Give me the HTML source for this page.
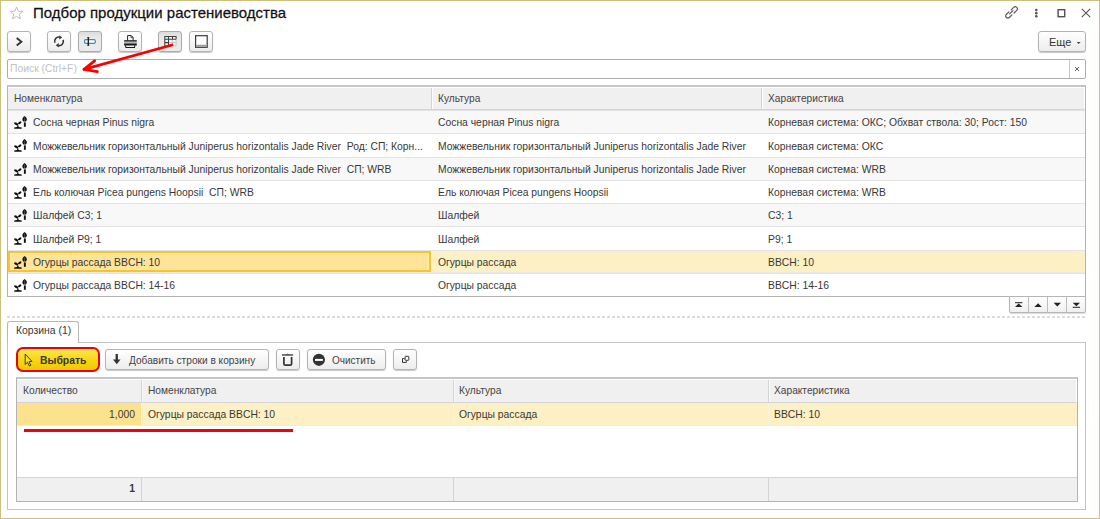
<!DOCTYPE html>
<html><head><meta charset="utf-8">
<style>
*{box-sizing:border-box;margin:0;padding:0}
html,body{width:1100px;height:519px;overflow:hidden;background:#fff}
body{position:relative;font-family:"Liberation Sans",sans-serif;font-size:10.35px;color:#383838}
.a{position:absolute}
.t{position:absolute;white-space:pre}
.frame{position:absolute;left:0;top:0;width:1100px;height:519px;border:1px solid #cdbf80}
.btn{position:absolute;height:21px;border:1px solid #b3b3b3;border-radius:3px;background:linear-gradient(#ffffff,#ededed);box-shadow:0 1px 1px rgba(0,0,0,.22)}
.btn.pr{background:linear-gradient(#dcdcdc,#e9e9e9 30%,#ebebeb);border-color:#ababab}
.btn svg{position:absolute;left:-1px;top:-1px}
.h{color:#454545;font-size:10.2px}
</style></head><body>
<div class="frame"></div>
<svg class="a" style="left:9px;top:6px" width="15" height="14" viewBox="0 0 15 14"><path d="M7.5 1 L9.2 5.2 L13.8 5.4 L10.2 8.3 L11.4 12.8 L7.5 10.3 L3.6 12.8 L4.8 8.3 L1.2 5.4 L5.8 5.2 Z" fill="none" stroke="#b9bfc7" stroke-width="1"/></svg>
<div class="t" style="left:33px;top:5px;font-size:15px;line-height:15px;color:#111;-webkit-text-stroke:0.25px #111;transform:scaleY(1.035);transform-origin:0 0">Подбор продукции растениеводства</div>
<svg class="a" style="left:1004px;top:5px" width="15" height="15" viewBox="0 0 15 15"><g fill="none" stroke="#5a5a5a" stroke-width="1.2" stroke-linecap="round"><path d="M5.6 8.9 L8.9 5.6"/><path d="M4.9 6.9 L2.3 9.5 a2.1 2.1 0 0 0 3 3 L7.9 9.9"/><path d="M10.1 8 L12.7 5.4 a2.1 2.1 0 0 0 -3 -3 L7.2 4.9"/></g></svg>
<svg class="a" style="left:1034px;top:8px" width="5" height="11" viewBox="0 0 5 11"><g fill="#555"><circle cx="2.3" cy="2" r="1.3"/><circle cx="2.3" cy="5.15" r="1.3"/><circle cx="2.3" cy="8.3" r="1.3"/></g></svg>
<svg class="a" style="left:1057px;top:9px" width="9" height="9" viewBox="0 0 9 9"><rect x="1.1" y="0.7" width="6.6" height="7" fill="none" stroke="#505050" stroke-width="1.4"/></svg>
<svg class="a" style="left:1081px;top:8px" width="10" height="10" viewBox="0 0 10 10"><path d="M0.8 0.8 L9.2 9.2 M9.2 0.8 L0.8 9.2" stroke="#555" stroke-width="1.1"/></svg>
<div class="btn" style="left:7px;top:31px;width:24px;height:21px"><svg width="24" height="21" viewBox="0 0 24 21"><path d="M9.7 6.9 L14.4 10.65 L9.7 14.4" fill="none" stroke="#333" stroke-width="1.9"/></svg></div>
<div class="btn" style="left:47px;top:31px;width:24px;height:21px"><svg width="24" height="21" viewBox="0 0 24 21"><g fill="none" stroke="#333" stroke-width="1.6"><path d="M7.9 11.8 A4.2 4.2 0 0 1 12.8 6.2"/><path d="M16.1 8.9 A4.2 4.2 0 0 1 11.2 14.5"/></g><path d="M12.3 4.2 L15.2 6.4 L12.3 8.6 Z" fill="#333"/><path d="M11.7 16.5 L8.8 14.3 L11.7 12.1 Z" fill="#333"/></svg></div>
<div class="btn pr" style="left:78px;top:31px;width:24px;height:21px"><svg width="24" height="21" viewBox="0 0 24 21"><rect x="6.5" y="8.6" width="10.8" height="3.8" rx="1.3" fill="#fff" stroke="#4682b8" stroke-width="1.2"/><path d="M10.3 6.4 V14.5" stroke="#1a1a1a" stroke-width="1.3"/><path d="M9.3 6.6 H11.3 M9.3 14.3 H11.3" stroke="#1a1a1a" stroke-width="0.9"/></svg></div>
<div class="btn" style="left:118px;top:31px;width:24px;height:21px"><svg width="24" height="21" viewBox="0 0 24 21"><path d="M9.6 9.6 V4.6 H13.3 L15.1 6.5 V9.6" fill="#fff" stroke="#222" stroke-width="1"/><path d="M13.1 4.6 V6.7 H15.1" fill="none" stroke="#222" stroke-width="0.8"/><rect x="6.1" y="9.2" width="12.7" height="1.4" fill="#1a1a1a"/><rect x="6.1" y="11.3" width="12.7" height="0.7" fill="#9a9a9a"/><rect x="6.1" y="12.4" width="12.7" height="2.1" fill="#1a1a1a"/><path d="M7.5 14.4 L7.9 16.4 H16.5 L16.9 14.4" fill="none" stroke="#1a1a1a" stroke-width="1.05"/></svg></div>
<div class="btn pr" style="left:158px;top:31px;width:24px;height:21px"><svg width="24" height="21" viewBox="0 0 24 21"><rect x="6.8" y="5.5" width="11.3" height="9.4" fill="#f4f4f4"/><g fill="none"><path d="M10.5 11.5 H18.1 V14.9 H10.5 M14.5 8.3 V14.9 M18.1 8.3 V11.5" stroke="#c4c4c4" stroke-width="0.9"/><path d="M6.8 15.2 V5.5 H18.1 V8.3 M6.8 8.3 H18.1 M6.8 11.6 H10.5 M6.8 14.9 H10.5 M10.5 5.5 V15.2 M14.5 5.5 V8.3" stroke="#404040" stroke-width="1.05"/></g></svg></div>
<div class="btn" style="left:189px;top:31px;width:24px;height:21px"><svg width="24" height="21" viewBox="0 0 24 21"><rect x="6.6" y="4.7" width="11.6" height="11.6" fill="#fff" stroke="#3a3a3a" stroke-width="1.2"/><rect x="7.2" y="14" width="10.4" height="1.7" fill="#9a9a9a"/><path d="M7.2 13.5 H17.6" stroke="#bbb" stroke-width="0.7" stroke-dasharray="1 0.8"/></svg></div>
<div class="btn" style="left:1038px;top:31px;width:48px;height:21px"><svg width="46" height="19" viewBox="0 0 46 19"><path d="M38.7 11 H42.7 L40.7 13.1 Z" fill="#444"/></svg><div class="t" style="left:10px;top:1px;line-height:19px;color:#333;font-size:11px">Еще</div></div>
<div class="a" style="left:7px;top:59px;width:1079px;height:20px;border:1px solid #adadad;border-radius:2px;background:#fff"></div>
<div class="t" style="left:10px;top:60px;line-height:18px;color:#c2c2c2;font-size:10.35px">Поиск (Ctrl+F)</div>
<div class="a" style="left:1069px;top:60px;width:1px;height:18px;background:#c8c8c8"></div>
<svg class="a" style="left:1073px;top:65px" width="8" height="8" viewBox="0 0 8 8"><path d="M2 2 L6 6 M6 2 L2 6" stroke="#555" stroke-width="0.95"/></svg>
<div class="a" style="left:7px;top:85px;width:1079px;height:212px;border:1px solid #b3b3b3;border-top:2px solid #c6c6c6;background:#fff"></div>
<div class="a" style="left:8px;top:87px;width:1077px;height:23px;background:#f0f0f0;border-top:1px solid #fff;border-right:1px solid #fff;border-bottom:1px solid #d4d4d4"></div>
<div class="a" style="left:431px;top:88px;width:1px;height:21px;background:#d4d4d4"></div>
<div class="a" style="left:432px;top:88px;width:1px;height:21px;background:#fff"></div>
<div class="a" style="left:761px;top:88px;width:1px;height:21px;background:#d4d4d4"></div>
<div class="a" style="left:762px;top:88px;width:1px;height:21px;background:#fff"></div>
<div class="t h" style="left:14px;top:88px;line-height:21px">Номенклатура</div>
<div class="t h" style="left:438px;top:88px;line-height:21px">Культура</div>
<div class="t h" style="left:768px;top:88px;line-height:21px">Характеристика</div>
<div class="a" style="left:8px;top:110px;width:1077px;height:23px;background:#f8f8f8;border-top:1px solid #e3e3e3"></div>
<div class="a" style="left:8px;top:110px;width:30px;height:23px"><svg class="a" style="left:6px;top:5px" width="15" height="15" viewBox="0 0 15 15"><g fill="#111"><path d="M10.6 0.9 C12.9 2.2 13.5 4.7 12 6.4 L9.2 6.4 C7.7 4.7 8.3 2.2 10.6 0.9 Z"/><rect x="9.9" y="7.4" width="1.9" height="4.4"/><ellipse cx="2.1" cy="8.8" rx="2.15" ry="1.2" transform="rotate(30 2.1 8.8)"/><ellipse cx="5.7" cy="7.8" rx="1.95" ry="1.05" transform="rotate(-35 5.7 7.8)"/><rect x="3.4" y="10" width="0.9" height="2"/><path d="M0.2 13.8 V12.5 Q1.6 12 2.9 12 Q3.2 11.2 3.85 11.2 Q4.5 11.2 4.8 12 Q6.3 12 7.7 12.5 V13.8 Z"/></g><path d="M10.6 2.4 V6.2" stroke="#777" stroke-width="0.6"/></svg></div>
<div class="t" style="left:33px;top:112px;line-height:22px">Сосна черная Pinus nigra</div>
<div class="t" style="left:438px;top:112px;line-height:22px">Сосна черная Pinus nigra</div>
<div class="t" style="left:768px;top:112px;line-height:22px">Корневая система: ОКС; Обхват ствола: 30; Рост: 150</div>
<div class="a" style="left:8px;top:133px;width:1077px;height:24px;background:#ffffff;border-top:1px solid #e3e3e3"></div>
<div class="a" style="left:8px;top:133px;width:30px;height:24px"><svg class="a" style="left:6px;top:5px" width="15" height="15" viewBox="0 0 15 15"><g fill="#111"><path d="M10.6 0.9 C12.9 2.2 13.5 4.7 12 6.4 L9.2 6.4 C7.7 4.7 8.3 2.2 10.6 0.9 Z"/><rect x="9.9" y="7.4" width="1.9" height="4.4"/><ellipse cx="2.1" cy="8.8" rx="2.15" ry="1.2" transform="rotate(30 2.1 8.8)"/><ellipse cx="5.7" cy="7.8" rx="1.95" ry="1.05" transform="rotate(-35 5.7 7.8)"/><rect x="3.4" y="10" width="0.9" height="2"/><path d="M0.2 13.8 V12.5 Q1.6 12 2.9 12 Q3.2 11.2 3.85 11.2 Q4.5 11.2 4.8 12 Q6.3 12 7.7 12.5 V13.8 Z"/></g><path d="M10.6 2.4 V6.2" stroke="#777" stroke-width="0.6"/></svg></div>
<div class="t" style="left:33px;top:135px;line-height:23px">Можжевельник горизонтальный Juniperus horizontalis Jade River  Род: СП; Корн...</div>
<div class="t" style="left:438px;top:135px;line-height:23px">Можжевельник горизонтальный Juniperus horizontalis Jade River</div>
<div class="t" style="left:768px;top:135px;line-height:23px">Корневая система: ОКС</div>
<div class="a" style="left:8px;top:157px;width:1077px;height:23px;background:#f8f8f8;border-top:1px solid #e3e3e3"></div>
<div class="a" style="left:8px;top:157px;width:30px;height:23px"><svg class="a" style="left:6px;top:5px" width="15" height="15" viewBox="0 0 15 15"><g fill="#111"><path d="M10.6 0.9 C12.9 2.2 13.5 4.7 12 6.4 L9.2 6.4 C7.7 4.7 8.3 2.2 10.6 0.9 Z"/><rect x="9.9" y="7.4" width="1.9" height="4.4"/><ellipse cx="2.1" cy="8.8" rx="2.15" ry="1.2" transform="rotate(30 2.1 8.8)"/><ellipse cx="5.7" cy="7.8" rx="1.95" ry="1.05" transform="rotate(-35 5.7 7.8)"/><rect x="3.4" y="10" width="0.9" height="2"/><path d="M0.2 13.8 V12.5 Q1.6 12 2.9 12 Q3.2 11.2 3.85 11.2 Q4.5 11.2 4.8 12 Q6.3 12 7.7 12.5 V13.8 Z"/></g><path d="M10.6 2.4 V6.2" stroke="#777" stroke-width="0.6"/></svg></div>
<div class="t" style="left:33px;top:159px;line-height:22px">Можжевельник горизонтальный Juniperus horizontalis Jade River  СП; WRB</div>
<div class="t" style="left:438px;top:159px;line-height:22px">Можжевельник горизонтальный Juniperus horizontalis Jade River</div>
<div class="t" style="left:768px;top:159px;line-height:22px">Корневая система: WRB</div>
<div class="a" style="left:8px;top:180px;width:1077px;height:23px;background:#ffffff;border-top:1px solid #e3e3e3"></div>
<div class="a" style="left:8px;top:180px;width:30px;height:23px"><svg class="a" style="left:6px;top:5px" width="15" height="15" viewBox="0 0 15 15"><g fill="#111"><path d="M10.6 0.9 C12.9 2.2 13.5 4.7 12 6.4 L9.2 6.4 C7.7 4.7 8.3 2.2 10.6 0.9 Z"/><rect x="9.9" y="7.4" width="1.9" height="4.4"/><ellipse cx="2.1" cy="8.8" rx="2.15" ry="1.2" transform="rotate(30 2.1 8.8)"/><ellipse cx="5.7" cy="7.8" rx="1.95" ry="1.05" transform="rotate(-35 5.7 7.8)"/><rect x="3.4" y="10" width="0.9" height="2"/><path d="M0.2 13.8 V12.5 Q1.6 12 2.9 12 Q3.2 11.2 3.85 11.2 Q4.5 11.2 4.8 12 Q6.3 12 7.7 12.5 V13.8 Z"/></g><path d="M10.6 2.4 V6.2" stroke="#777" stroke-width="0.6"/></svg></div>
<div class="t" style="left:33px;top:182px;line-height:22px">Ель колючая Picea pungens Hoopsii  СП; WRB</div>
<div class="t" style="left:438px;top:182px;line-height:22px">Ель колючая Picea pungens Hoopsii</div>
<div class="t" style="left:768px;top:182px;line-height:22px">Корневая система: WRB</div>
<div class="a" style="left:8px;top:203px;width:1077px;height:23px;background:#f8f8f8;border-top:1px solid #e3e3e3"></div>
<div class="a" style="left:8px;top:203px;width:30px;height:23px"><svg class="a" style="left:6px;top:5px" width="15" height="15" viewBox="0 0 15 15"><g fill="#111"><path d="M10.6 0.9 C12.9 2.2 13.5 4.7 12 6.4 L9.2 6.4 C7.7 4.7 8.3 2.2 10.6 0.9 Z"/><rect x="9.9" y="7.4" width="1.9" height="4.4"/><ellipse cx="2.1" cy="8.8" rx="2.15" ry="1.2" transform="rotate(30 2.1 8.8)"/><ellipse cx="5.7" cy="7.8" rx="1.95" ry="1.05" transform="rotate(-35 5.7 7.8)"/><rect x="3.4" y="10" width="0.9" height="2"/><path d="M0.2 13.8 V12.5 Q1.6 12 2.9 12 Q3.2 11.2 3.85 11.2 Q4.5 11.2 4.8 12 Q6.3 12 7.7 12.5 V13.8 Z"/></g><path d="M10.6 2.4 V6.2" stroke="#777" stroke-width="0.6"/></svg></div>
<div class="t" style="left:33px;top:205px;line-height:22px">Шалфей С3; 1</div>
<div class="t" style="left:438px;top:205px;line-height:22px">Шалфей</div>
<div class="t" style="left:768px;top:205px;line-height:22px">С3; 1</div>
<div class="a" style="left:8px;top:226px;width:1077px;height:24px;background:#ffffff;border-top:1px solid #e3e3e3"></div>
<div class="a" style="left:8px;top:226px;width:30px;height:24px"><svg class="a" style="left:6px;top:5px" width="15" height="15" viewBox="0 0 15 15"><g fill="#111"><path d="M10.6 0.9 C12.9 2.2 13.5 4.7 12 6.4 L9.2 6.4 C7.7 4.7 8.3 2.2 10.6 0.9 Z"/><rect x="9.9" y="7.4" width="1.9" height="4.4"/><ellipse cx="2.1" cy="8.8" rx="2.15" ry="1.2" transform="rotate(30 2.1 8.8)"/><ellipse cx="5.7" cy="7.8" rx="1.95" ry="1.05" transform="rotate(-35 5.7 7.8)"/><rect x="3.4" y="10" width="0.9" height="2"/><path d="M0.2 13.8 V12.5 Q1.6 12 2.9 12 Q3.2 11.2 3.85 11.2 Q4.5 11.2 4.8 12 Q6.3 12 7.7 12.5 V13.8 Z"/></g><path d="M10.6 2.4 V6.2" stroke="#777" stroke-width="0.6"/></svg></div>
<div class="t" style="left:33px;top:228px;line-height:23px">Шалфей Р9; 1</div>
<div class="t" style="left:438px;top:228px;line-height:23px">Шалфей</div>
<div class="t" style="left:768px;top:228px;line-height:23px">Р9; 1</div>
<div class="a" style="left:8px;top:250px;width:1077px;height:23px;background:#fdf0c4;border-top:1px solid #e3e3e3"></div>
<div class="a" style="left:8px;top:251px;width:423px;height:21px;background:#fde498;border:2px solid #f6c42c;box-shadow:inset 0 0 0 1px #fcebb0"></div>
<div class="a" style="left:431px;top:251px;width:1px;height:21px;background:#f8f3e0"></div>
<div class="a" style="left:8px;top:272px;width:1077px;height:1px;background:#e9e9ec"></div>
<div class="a" style="left:8px;top:250px;width:30px;height:23px"><svg class="a" style="left:6px;top:5px" width="15" height="15" viewBox="0 0 15 15"><g fill="#111"><path d="M10.6 0.9 C12.9 2.2 13.5 4.7 12 6.4 L9.2 6.4 C7.7 4.7 8.3 2.2 10.6 0.9 Z"/><rect x="9.9" y="7.4" width="1.9" height="4.4"/><ellipse cx="2.1" cy="8.8" rx="2.15" ry="1.2" transform="rotate(30 2.1 8.8)"/><ellipse cx="5.7" cy="7.8" rx="1.95" ry="1.05" transform="rotate(-35 5.7 7.8)"/><rect x="3.4" y="10" width="0.9" height="2"/><path d="M0.2 13.8 V12.5 Q1.6 12 2.9 12 Q3.2 11.2 3.85 11.2 Q4.5 11.2 4.8 12 Q6.3 12 7.7 12.5 V13.8 Z"/></g><path d="M10.6 2.4 V6.2" stroke="#777" stroke-width="0.6"/></svg></div>
<div class="t" style="left:33px;top:252px;line-height:22px">Огурцы рассада BBCH: 10</div>
<div class="t" style="left:438px;top:252px;line-height:22px">Огурцы рассада</div>
<div class="t" style="left:768px;top:252px;line-height:22px">BBCH: 10</div>
<div class="a" style="left:8px;top:273px;width:1077px;height:23px;background:#ffffff;border-top:1px solid #e3e3e3"></div>
<div class="a" style="left:8px;top:273px;width:30px;height:23px"><svg class="a" style="left:6px;top:5px" width="15" height="15" viewBox="0 0 15 15"><g fill="#111"><path d="M10.6 0.9 C12.9 2.2 13.5 4.7 12 6.4 L9.2 6.4 C7.7 4.7 8.3 2.2 10.6 0.9 Z"/><rect x="9.9" y="7.4" width="1.9" height="4.4"/><ellipse cx="2.1" cy="8.8" rx="2.15" ry="1.2" transform="rotate(30 2.1 8.8)"/><ellipse cx="5.7" cy="7.8" rx="1.95" ry="1.05" transform="rotate(-35 5.7 7.8)"/><rect x="3.4" y="10" width="0.9" height="2"/><path d="M0.2 13.8 V12.5 Q1.6 12 2.9 12 Q3.2 11.2 3.85 11.2 Q4.5 11.2 4.8 12 Q6.3 12 7.7 12.5 V13.8 Z"/></g><path d="M10.6 2.4 V6.2" stroke="#777" stroke-width="0.6"/></svg></div>
<div class="t" style="left:33px;top:275px;line-height:22px">Огурцы рассада BBCH: 14-16</div>
<div class="t" style="left:438px;top:275px;line-height:22px">Огурцы рассада</div>
<div class="t" style="left:768px;top:275px;line-height:22px">BBCH: 14-16</div>
<div class="a" style="left:1009px;top:296px;width:77px;height:17px;border:1px solid #b5b5b5;border-radius:0 0 2px 2px;background:linear-gradient(#fff,#efefef);box-shadow:0 1px 1px rgba(0,0,0,.15)"></div>
<div class="a" style="left:1028px;top:297px;width:1px;height:16px;background:#bdbdbd"></div>
<div class="a" style="left:1047px;top:297px;width:1px;height:16px;background:#bdbdbd"></div>
<div class="a" style="left:1066px;top:297px;width:1px;height:16px;background:#bdbdbd"></div>
<svg class="a" style="left:1009px;top:296px" width="77" height="17" viewBox="0 0 77 17"><g fill="#222"><path d="M6 6.2 H13.4 V7.2 H6 Z"/><path d="M9.7 7.5 L13.4 10.9 H6 Z"/><path d="M25.4 10.9 L29.1 7.2 L32.8 10.9 Z"/><path d="M44.6 6.8 H52 L48.3 10.6 Z"/><path d="M63.7 6.7 H71 L67.35 10.3 Z"/><path d="M63.7 10.8 H71 V11.8 H63.7 Z"/></g></svg>
<div class="a" style="left:7px;top:316px;width:1079px;height:2px;background:repeating-linear-gradient(90deg,#dcdcdc 0 3px,transparent 3px 5px)"></div>
<div class="a" style="left:7px;top:342px;width:1079px;height:168px;border:1px solid #c4c4c4;background:#fff"></div>
<div class="a" style="left:7px;top:321px;width:72px;height:22px;border:1px solid #b9b9b9;border-bottom:none;border-radius:3px 3px 0 0;background:#fff"></div>
<div class="t" style="left:16px;top:321px;line-height:20px;font-size:10.4px">Корзина (1)</div>
<div class="a" style="left:16px;top:347px;width:84px;height:25px;border-radius:7px;background:linear-gradient(#fbe64e,#f6d410 60%,#f0c800);border:2.6px solid #e9000c"></div>
<svg class="a" style="left:23px;top:352px" width="11" height="16" viewBox="0 0 11 16"><path d="M2.2 2 L2.2 12.4 L4.5 10.3 L6.4 14 L7.8 13.3 L6 9.7 L9 9.4 Z" fill="#f8dc30" stroke="#3a3a3a" stroke-width="1" stroke-linejoin="round"/></svg>
<div class="t" style="left:40px;top:350px;line-height:22px;font-weight:bold;font-size:10.4px">Выбрать</div>
<div class="btn" style="left:105px;top:349px;width:164px;height:21px"><svg width="20" height="21" viewBox="0 0 20 21"><path d="M10.6 5.1 V10.6 H8 L11.8 15.2 L15.5 10.6 H12.9 V5.1 Z" fill="#333"/></svg><div class="t" style="left:23px;top:1px;line-height:19px;color:#444;font-size:10.15px">Добавить строки в корзину</div></div>
<div class="btn" style="left:276px;top:349px;width:24px;height:21px"><svg width="24" height="21" viewBox="0 0 24 21"><path d="M6 6 H17.1" stroke="#333" stroke-width="1.3"/><path d="M9.6 5.4 Q11.5 3.9 13.4 5.4 Z" fill="#333"/><path d="M7.9 7.9 V14.8 Q7.9 16.2 9.3 16.2 H14.2 Q15.6 16.2 15.6 14.8 V7.9" fill="none" stroke="#333" stroke-width="1.7"/></svg></div>
<div class="btn" style="left:307px;top:349px;width:79px;height:21px"><svg width="24" height="21" viewBox="0 0 24 21"><circle cx="11.9" cy="10.8" r="6.1" fill="#333"/><rect x="8" y="9.9" width="7.9" height="2" fill="#fff"/></svg><div class="t" style="left:24px;top:1px;line-height:19px;color:#444;font-size:10px">Очистить</div></div>
<div class="btn" style="left:393px;top:349px;width:24px;height:21px"><svg width="24" height="21" viewBox="0 0 24 21"><path d="M11.6 9.6 H9.5 V13.4 H13.4 V12.2" fill="none" stroke="#333" stroke-width="1"/><rect x="12.1" y="7.3" width="3.7" height="4" rx="0.6" fill="#fff" stroke="#333" stroke-width="1"/></svg></div>
<div class="a" style="left:16px;top:377px;width:1062px;height:125px;border:1px solid #b3b3b3;border-top:2px solid #c6c6c6;background:#fff"></div>
<div class="a" style="left:17px;top:379px;width:1060px;height:24px;background:#f0f0f0;border-top:1px solid #fff;border-right:1px solid #fff;border-bottom:1px solid #d4d4d4"></div>
<div class="a" style="left:141px;top:380px;width:1px;height:22px;background:#d4d4d4"></div>
<div class="a" style="left:142px;top:380px;width:1px;height:22px;background:#fafafa"></div>
<div class="a" style="left:453px;top:380px;width:1px;height:22px;background:#d4d4d4"></div>
<div class="a" style="left:454px;top:380px;width:1px;height:22px;background:#fafafa"></div>
<div class="a" style="left:768px;top:380px;width:1px;height:22px;background:#d4d4d4"></div>
<div class="a" style="left:769px;top:380px;width:1px;height:22px;background:#fafafa"></div>
<div class="t h" style="left:23px;top:380px;line-height:21px">Количество</div>
<div class="t h" style="left:148px;top:380px;line-height:21px">Номенклатура</div>
<div class="t h" style="left:459px;top:380px;line-height:21px">Культура</div>
<div class="t h" style="left:774px;top:380px;line-height:21px">Характеристика</div>
<div class="a" style="left:17px;top:403px;width:1060px;height:22px;background:#fdf0c4"></div>
<div class="a" style="left:17px;top:403px;width:124px;height:22px;background:#fde28e"></div>
<div class="a" style="left:141px;top:403px;width:1px;height:22px;background:#f8f3e0"></div>
<div class="a" style="left:453px;top:403px;width:1px;height:22px;background:#f8f3e0"></div>
<div class="a" style="left:768px;top:403px;width:1px;height:22px;background:#f8f3e0"></div>
<div class="a" style="left:17px;top:425px;width:1060px;height:1px;background:#ececec"></div>
<div class="t" style="left:17px;top:403px;width:118px;line-height:23px;text-align:right">1,000</div>
<div class="t" style="left:148px;top:403px;line-height:23px">Огурцы рассада BBCH: 10</div>
<div class="t" style="left:459px;top:403px;line-height:23px">Огурцы рассада</div>
<div class="t" style="left:774px;top:403px;line-height:23px">BBCH: 10</div>
<div class="a" style="left:17px;top:477px;width:1060px;height:24px;background:#f0f0f0;border-top:1px solid #d4d4d4"></div>
<div class="a" style="left:141px;top:478px;width:1px;height:23px;background:#d4d4d4"></div>
<div class="a" style="left:453px;top:478px;width:1px;height:23px;background:#d4d4d4"></div>
<div class="a" style="left:768px;top:478px;width:1px;height:23px;background:#d4d4d4"></div>
<div class="t" style="left:17px;top:477px;width:118px;line-height:23px;text-align:right;font-weight:bold">1</div>
<div class="a" style="left:24px;top:429px;width:269px;height:3px;background:#f5000a"></div>
<svg class="a" style="left:0;top:0" width="200" height="90" viewBox="0 0 200 90"><g fill="none" stroke="#fa0000" stroke-width="2.8" stroke-linecap="round" stroke-linejoin="round"><path d="M172 45 L84 69.3"/><path d="M94.6 60.8 L84 69.3 L97.4 71.6"/></g></svg>
</body></html>
